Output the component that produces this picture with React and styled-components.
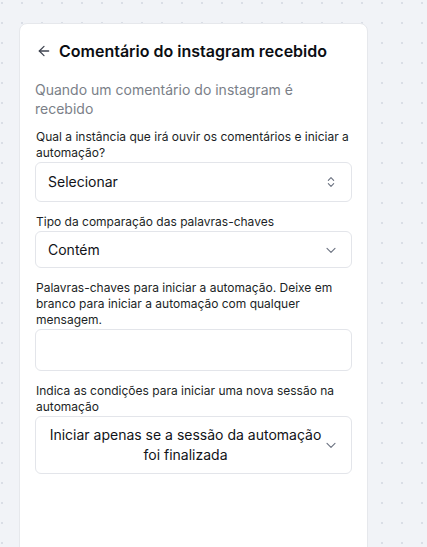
import React from "react";
import styled, { createGlobalStyle } from "styled-components";

const GlobalStyle = createGlobalStyle`
  html, body {
    margin: 0;
    padding: 0;
    height: 100%;
    overflow: hidden;
  }
  body {
    font-family: Inter, "Noto Sans", sans-serif;
    background-color: #f1f3f7;
    background-image: radial-gradient(circle, #dadee6 1px, transparent 1.3px);
    background-size: 20px 20px;
    background-position: -8px -7px;
  }
`;

const ChevronDown = () => (
    <svg width="16" height="16" viewBox="0 0 24 24" fill="none" stroke="#6b7280" strokeWidth="1.7" strokeLinecap="round" strokeLinejoin="round">
        <path d="M6 9.5l6 6 6-6" />
    </svg>
);

const ChevronsUpDown = () => (
    <svg width="16" height="16" viewBox="0 0 24 24" fill="none" stroke="#6b7280" strokeWidth="1.7" strokeLinecap="round" strokeLinejoin="round">
        <path d="M8 9.5l4-4 4 4" />
        <path d="M8 14.5l4 4 4-4" />
    </svg>
);

export default function App() {
    return (
        <>
            <GlobalStyle />
            <Screen>
                <Card>
                    <Header>
                        <BackButton aria-label="Voltar">
                            <svg width="16" height="16" viewBox="0 0 24 24" fill="none" stroke="#3f4450" strokeWidth="1.9" strokeLinecap="round" strokeLinejoin="round">
                                <path d="M19 12H5" />
                                <path d="M12 19l-7-7 7-7" />
                            </svg>
                        </BackButton>
                        <Title>Comentário do instagram recebido</Title>
                    </Header>
                    <Subtitle>Quando um comentário do instagram é recebido</Subtitle>

                    <Field>
                        <Label>Qual a instância que irá ouvir os comentários e iniciar a automação?</Label>
                        <SelectBox $height={40}>
                            <SelectText>Selecionar</SelectText>
                            <Chevron><ChevronsUpDown /></Chevron>
                        </SelectBox>
                    </Field>

                    <Field>
                        <Label>Tipo da comparação das palavras-chaves</Label>
                        <SelectBox $height={37}>
                            <SelectText>Contém</SelectText>
                            <Chevron><ChevronDown /></Chevron>
                        </SelectBox>
                    </Field>

                    <Field>
                        <Label>Palavras-chaves para iniciar a automação. Deixe em branco para iniciar a automação com qualquer mensagem.</Label>
                        <TextInput />
                    </Field>

                    <Field>
                        <Label>Indica as condições para iniciar uma nova sessão na automação</Label>
                        <SelectBox $height={58}>
                            <SelectText $center>Iniciar apenas se a sessão da automação foi finalizada</SelectText>
                            <Chevron><ChevronDown /></Chevron>
                        </SelectBox>
                    </Field>
                </Card>
            </Screen>
        </>
    );
}

const Screen = styled.div`
  padding: 23px 0 0 19px;
  height: 547px;
  box-sizing: border-box;
`;

const Card = styled.div`
  width: 349px;
  height: 540px;
  box-sizing: border-box;
  background: #ffffff;
  border: 1px solid #e6e8ec;
  border-radius: 8px;
  padding: 15px 15px 0 15px;
  display: flex;
  flex-direction: column;
`;

const Header = styled.div`
  display: flex;
  align-items: center;
  gap: 7px;
  height: 24px;
  padding-left: 1px;
`;

const BackButton = styled.div`
  display: flex;
  align-items: center;
  justify-content: center;
  width: 16px;
  height: 16px;
`;

const Title = styled.h1`
  margin: 0;
  font-size: 16px;
  font-weight: 600;
  color: #0b0d12;
  line-height: 24px;
  white-space: nowrap;
`;

const Subtitle = styled.p`
  margin: 17px 0 11px 0;
  font-size: 14px;
  line-height: 19px;
  color: #7b7f88;
`;

const Field = styled.div`
  display: flex;
  flex-direction: column;
  margin-bottom: 12px;
`;

const Label = styled.label`
  font-size: 12px;
  line-height: 16px;
  color: #1c1f26;
  padding-left: 1px;
  margin-bottom: 1px;
`;

const SelectBox = styled.div`
  position: relative;
  height: ${(p) => p.$height}px;
  box-sizing: border-box;
  border: 1px solid #e3e5ea;
  border-radius: 6px;
  display: flex;
  align-items: center;
  padding: 0 28px 0 12px;
`;

const SelectText = styled.span`
  flex: 1;
  font-size: 14px;
  line-height: 20px;
  color: #111318;
  text-align: ${(p) => (p.$center ? "center" : "left")};
`;

const Chevron = styled.span`
  position: absolute;
  right: 12px;
  top: 50%;
  transform: translateY(-50%);
  display: flex;
`;

const TextInput = styled.input`
  height: 42px;
  box-sizing: border-box;
  border: 1px solid #e3e5ea;
  border-radius: 6px;
  padding: 0 12px;
  font-family: inherit;
  font-size: 14px;
  &:focus {
    outline: none;
  }
`;
